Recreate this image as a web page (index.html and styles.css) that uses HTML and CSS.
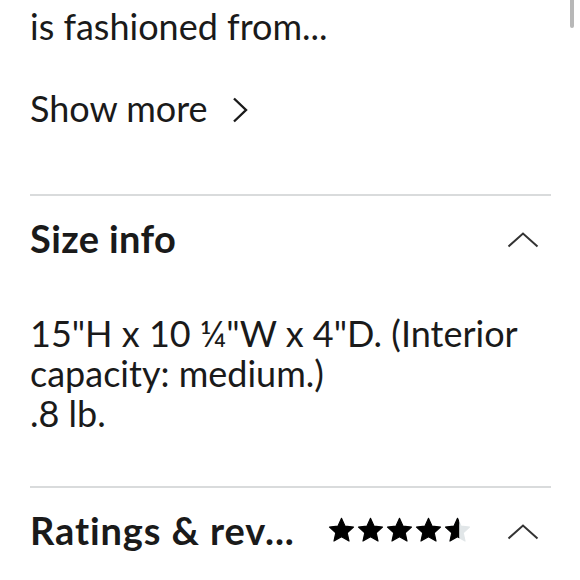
FILE: index.html
```html
<!DOCTYPE html>
<html>
<head>
<meta charset="utf-8">
<link rel="stylesheet" href="styles.css">
</head>
<body>
<div class="scrollbar"></div>
<main class="page">
  <section class="desc">
    <p class="desc-text">is fashioned from...</p>
    <a class="show-more">Show more
      <svg class="chev-right" viewBox="0 0 16 26" width="16" height="26"><path d="M2 1.5 L14 13 L2 24.5" fill="none" stroke="#1a1a1a" stroke-width="2.4"/></svg>
    </a>
  </section>
  <section class="panel">
    <div class="panel-head">
      <h2 class="panel-title">Size info</h2>
      <svg class="chev-up" viewBox="0 0 32 16" width="32" height="16"><path d="M1.5 14.5 L16 1.5 L30.5 14.5" fill="none" stroke="#333" stroke-width="2"/></svg>
    </div>
    <p class="size-text">15"H x 10 ¼"W x 4"D. (Interior capacity: medium.)<br>.8 lb.</p>
  </section>
  <section class="panel">
    <div class="panel-head">
      <h2 class="panel-title ratings-title">Ratings &amp; rev...</h2>
      <div class="stars">
        <svg viewBox="0 0 24 24" class="star"><path d="M12 1.2l3.2 6.9 7.5.8-5.6 5.1 1.6 7.4L12 17.6l-6.7 3.8 1.6-7.4L1.3 8.9l7.5-.8z" fill="#000" stroke="#000" stroke-width="1" stroke-linejoin="round"/></svg>
        <svg viewBox="0 0 24 24" class="star"><path d="M12 1.2l3.2 6.9 7.5.8-5.6 5.1 1.6 7.4L12 17.6l-6.7 3.8 1.6-7.4L1.3 8.9l7.5-.8z" fill="#000" stroke="#000" stroke-width="1" stroke-linejoin="round"/></svg>
        <svg viewBox="0 0 24 24" class="star"><path d="M12 1.2l3.2 6.9 7.5.8-5.6 5.1 1.6 7.4L12 17.6l-6.7 3.8 1.6-7.4L1.3 8.9l7.5-.8z" fill="#000" stroke="#000" stroke-width="1" stroke-linejoin="round"/></svg>
        <svg viewBox="0 0 24 24" class="star"><path d="M12 1.2l3.2 6.9 7.5.8-5.6 5.1 1.6 7.4L12 17.6l-6.7 3.8 1.6-7.4L1.3 8.9l7.5-.8z" fill="#000" stroke="#000" stroke-width="1" stroke-linejoin="round"/></svg>
        <svg viewBox="0 0 24 24" class="star"><defs><clipPath id="half"><rect x="0" y="0" width="13.5" height="24"/></clipPath></defs><path d="M12 1.2l3.2 6.9 7.5.8-5.6 5.1 1.6 7.4L12 17.6l-6.7 3.8 1.6-7.4L1.3 8.9l7.5-.8z" fill="#e1e6e8" stroke="#e1e6e8" stroke-width="1" stroke-linejoin="round"/><path clip-path="url(#half)" d="M12 1.2l3.2 6.9 7.5.8-5.6 5.1 1.6 7.4L12 17.6l-6.7 3.8 1.6-7.4L1.3 8.9l7.5-.8z" fill="#000" stroke="#000" stroke-width="1" stroke-linejoin="round"/></svg>
      </div>
      <svg class="chev-up" viewBox="0 0 32 16" width="32" height="16"><path d="M1.5 14.5 L16 1.5 L30.5 14.5" fill="none" stroke="#333" stroke-width="2"/></svg>
    </div>
  </section>
</main>
</body>
</html>
```
FILE: styles.css
```css
html, body {
  margin: 0;
  padding: 0;
  background: #fff;
}
body {
  font-family: Lato, "Open Sans", sans-serif;
  color: #1a1a1a;
  overflow: hidden;
  height: 580px;
}
.scrollbar {
  position: absolute;
  top: 0;
  right: 6px;
  width: 4px;
  height: 28px;
  border-radius: 0 0 2px 2px;
  background: #b8b8b8;
}
.page {
  padding: 0 29px 0 30px;
}
.desc {
  padding-bottom: 65px;
}
.desc-text {
  margin: 0;
  padding-top: 6px;
  font-size: 36px;
  line-height: 41px;
}
.show-more {
  display: flex;
  align-items: center;
  gap: 24px;
  margin-top: 41px;
  font-size: 36px;
  line-height: 41px;
}
.chev-right {
  margin-top: 2px;
}
.panel {
  border-top: 2px solid #d9dbdc;
}
.panel-head {
  display: flex;
  align-items: center;
  padding-top: 22px;
}
.panel-title {
  margin: 0;
  flex: 1;
  font-size: 38px;
  line-height: 41px;
  font-weight: 700;
  letter-spacing: 0.4px;
}
.ratings-title {
  letter-spacing: 0.9px;
}
.chev-up {
  margin-right: 12px;
  margin-top: 2px;
}
.size-text {
  margin: 0;
  padding-top: 54px;
  padding-bottom: 53px;
  font-size: 36px;
  line-height: 40px;
}
.stars {
  display: flex;
  gap: 2px;
  margin-right: 36px;
}
.star {
  width: 27px;
  height: 27px;
}
```
